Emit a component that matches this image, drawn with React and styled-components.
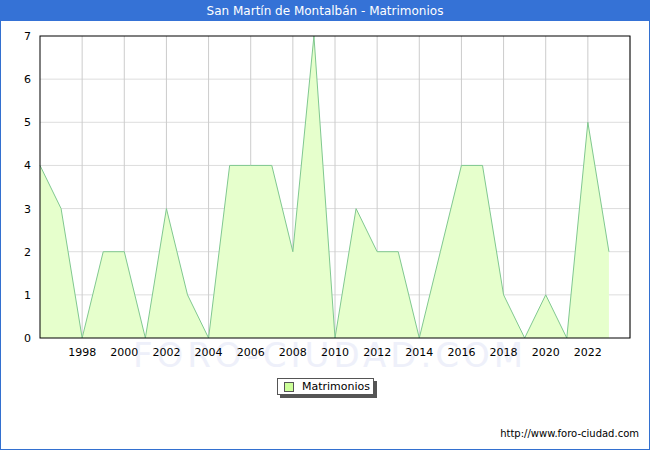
import React from "react";
import styled, { createGlobalStyle } from "styled-components";

const G = createGlobalStyle`
  html,body{margin:0;padding:0;background:#fff;font-family:"DejaVu Sans",sans-serif;}
`;
const Frame = styled.div`
  width:650px;height:450px;box-sizing:border-box;border:1px solid #3370d0;
  display:flex;flex-direction:column;position:relative;
`;
const Title = styled.div`
  height:21px;background:#3572d6;color:#fff;font-size:12px;
  display:flex;align-items:center;justify-content:center;margin:-1px -1px 0;
`;
const Legend = styled.div`
  position:absolute;left:276px;top:377px;width:97px;height:17px;box-sizing:border-box;
  border:1px solid #555;background:#fff;box-shadow:3px 3px 0 #555;
  display:flex;align-items:center;gap:8px;padding-left:6px;font-size:11px;color:#000;
`;
const Swatch = styled.span`width:8px;height:8px;border:1px solid #555;background:#ccff99;`;
const Url = styled.div`
  position:absolute;right:10px;top:427px;font-size:10px;color:#000;
`;

const data=[4,3,0,2,2,0,3,1,0,4,4,4,2,7,0,3,2,2,0,2,4,4,1,0,1,0,5,2];
const x0=40,x1=630,y0=337,y1=35,dx=(x1-x0)/28,dy=(y0-y1)/7;
const X=i=>x0+i*dx,Y=v=>y0-v*dy;

export default function App(){
  const pts=data.map((v,i)=>`${X(i)},${Y(v)}`).join(" ");
  const area=`${X(0)},${y0} ${pts} ${X(27)},${y0}`;
  return(<Frame><G/>
    <Title>San Martín de Montalbán - Matrimonios</Title>
    <svg width="650" height="430" style={{position:"absolute",left:-1,top:20}} viewBox="0 20 650 430">
      <text x="330" y="366" fontSize="34" fill="#eef0fa" textAnchor="middle" fontFamily="DejaVu Sans" letterSpacing="4">FORO-CIUDAD.COM</text>
      {[1,2,3,4,5,6].map(v=><line key={v} x1={x0} x2={x1} y1={Y(v)} y2={Y(v)} stroke="#ddd"/>)}
      {Array.from({length:14},(_,k)=>2+k*2).map(i=><line key={i} x1={X(i)} x2={X(i)} y1={y1} y2={y0} stroke="#ccc"/>)}
      <polygon points={area} fill="#e6ffcc"/>
      <polyline points={pts} fill="none" stroke="#80c890"/>
      <rect x={x0} y={y1} width={x1-x0} height={y0-y1} fill="none" stroke="#000"/>
      {[0,1,2,3,4,5,6,7].map(v=><text key={v} x="31" y={Y(v)+4} fontSize="11" textAnchor="end" fontFamily="DejaVu Sans">{v}</text>)}
      {Array.from({length:13},(_,k)=>2+k*2).map(i=><text key={i} x={X(i)} y="355" fontSize="11" textAnchor="middle" fontFamily="DejaVu Sans">{1996+i}</text>)}
    </svg>
    <Legend><Swatch/>Matrimonios</Legend>
    <Url>http://www.foro-ciudad.com</Url>
  </Frame>);
}
